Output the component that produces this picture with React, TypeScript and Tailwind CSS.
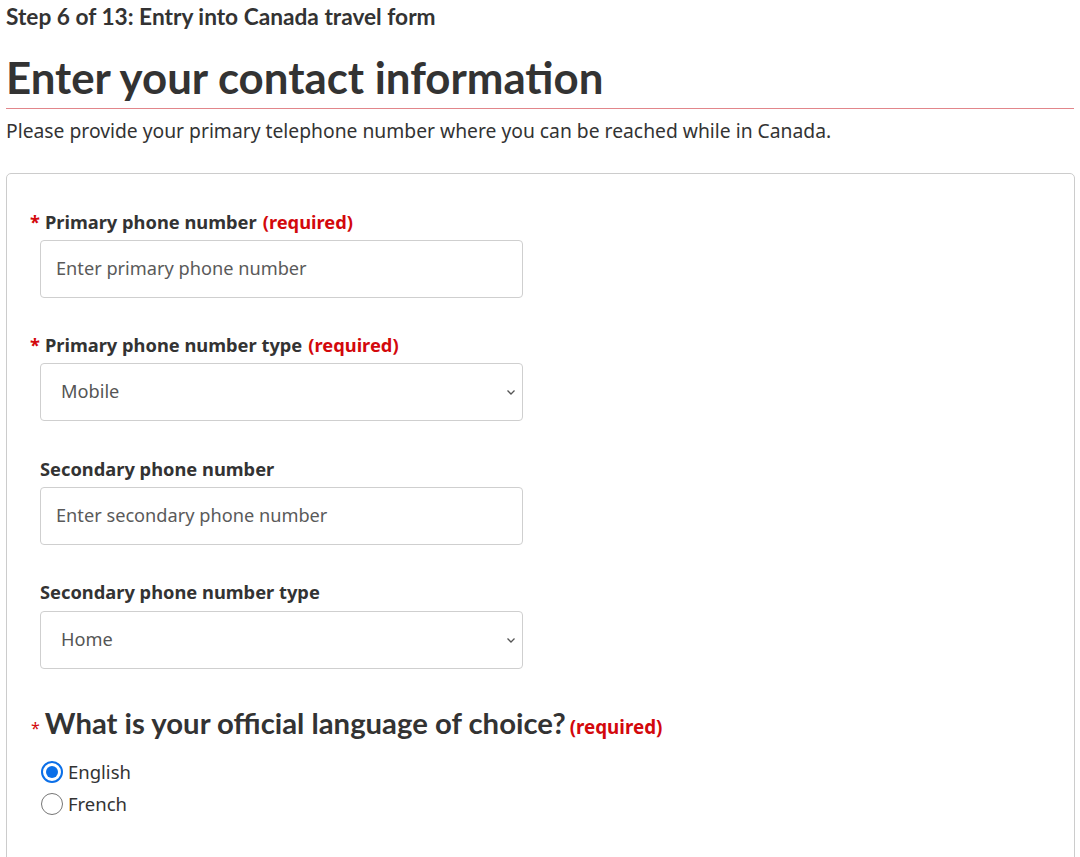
import React from "react";

const body = { fontFamily: '"Noto Sans", "Open Sans", sans-serif' };
const head = { fontFamily: 'Lato, "Noto Sans", sans-serif' };

function Label({ text, required }: { text: string; required?: boolean }) {
  return (
    <div className="flex items-baseline h-[24px] text-[18.3px] font-bold text-[#333] leading-[24px]" style={body}>
      {required ? (
        <span className="ml-[-10px] mr-[5px] text-[#d3080c]">*</span>
      ) : null}
      <span>{text}</span>
      {required ? <span className="ml-[6px] text-[#d3080c]">(required)</span> : null}
    </div>
  );
}

function Input({ placeholder }: { placeholder: string }) {
  return (
    <div className="w-[483px] h-[58px] border border-[#cfcfcf] rounded-[4px] flex items-center pl-[15px] text-[18.2px] text-[#5a5a5a] bg-white" style={body}>
      {placeholder}
    </div>
  );
}

function Select({ value }: { value: string }) {
  return (
    <div className="w-[483px] h-[58px] border border-[#cfcfcf] rounded-[4px] flex items-center justify-between pl-[20px] pr-[5px] text-[18.2px] text-[#555] bg-white" style={body}>
      <span>{value}</span>
      <svg width="12" height="12" viewBox="0 0 12 12" fill="none">
        <path d="M2.5 4.5 L6 8 L9.5 4.5" stroke="#555" strokeWidth="1.3" />
      </svg>
    </div>
  );
}

function Radio({ checked, label }: { checked?: boolean; label: string }) {
  return (
    <div className="flex items-center h-[32px] ml-[1px]">
      {checked ? (
        <span className="w-[22px] h-[22px] rounded-full border-2 border-[#0b6fe8] flex items-center justify-center">
          <span className="w-[12px] h-[12px] rounded-full bg-[#0b6fe8]"></span>
        </span>
      ) : (
        <span className="w-[22px] h-[22px] rounded-full border border-[#767676]"></span>
      )}
      <span className="ml-[5px] text-[18.5px] text-[#333]" style={body}>{label}</span>
    </div>
  );
}

export default function App() {
  return (
    <div className="w-[1080px] h-[857px] overflow-hidden bg-white text-[#333] px-[6px]">
      <div>
        <div className="pt-[4px] h-[34px] text-[22.7px] font-bold leading-[26px]" style={head}>
          Step 6 of 13: Entry into Canada travel form
        </div>
        <h1 className="mt-[17px] text-[43.8px] font-bold leading-[52px] pb-[5px] border-b border-[#e2868b]" style={head}>
          Enter your contact information
        </h1>
        <p className="mt-[9px] text-[19.3px] leading-[26px]" style={body}>
          Please provide your primary telephone number where you can be reached while in Canada.
        </p>
        <div className="mt-[29px] w-[1069px] border border-[#cccccc] rounded-[5px] h-[720px] pl-[33px] pt-[36px]">
          <Label text="Primary phone number" required />
          <div className="mt-[6px]"><Input placeholder="Enter primary phone number" /></div>
          <div className="mt-[35px]"><Label text="Primary phone number type" required /></div>
          <div className="mt-[6px]"><Select value="Mobile" /></div>
          <div className="mt-[36px]"><Label text="Secondary phone number" /></div>
          <div className="mt-[6px]"><Input placeholder="Enter secondary phone number" /></div>
          <div className="mt-[35px]"><Label text="Secondary phone number type" /></div>
          <div className="mt-[7px]"><Select value="Home" /></div>
          <div className="mt-[32px] flex items-baseline h-[40px]">
            <span className="ml-[-9px] mr-[5px] text-[16px] text-[#d3080c]" style={body}>*</span>
            <span className="text-[29.3px] font-bold text-[#333]" style={head}>What is your official language of choice?</span>
            <span className="ml-[4px] text-[18.8px] font-bold text-[#d3080c]" style={body}>(required)</span>
          </div>
          <div className="mt-[15px]">
            <Radio checked label="English" />
            <Radio label="French" />
          </div>
        </div>
      </div>
    </div>
  );
}
